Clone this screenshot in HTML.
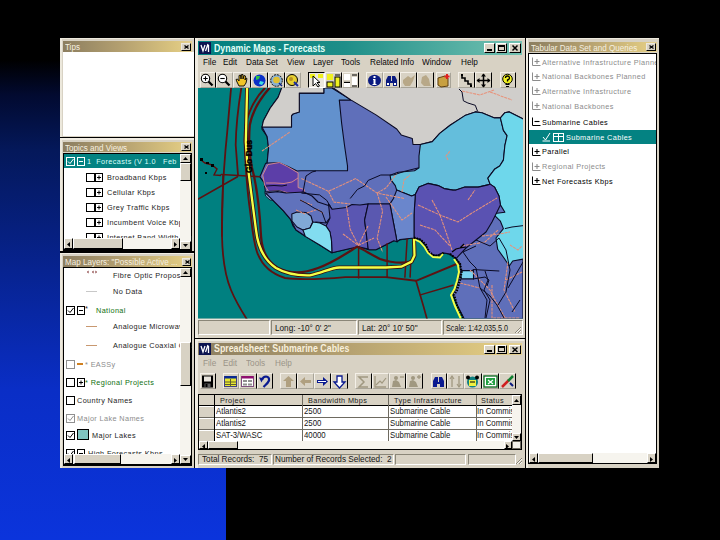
<!DOCTYPE html>
<html><head><meta charset="utf-8"><style>
*{margin:0;padding:0;box-sizing:border-box}
html,body{width:720px;height:540px;overflow:hidden;background:#000}
body{position:relative;font-family:"Liberation Sans",sans-serif;font-size:9px;color:#000}
.a{position:absolute}
svg.a{overflow:visible}
.tt{background:linear-gradient(to right,#8c7e60,#b4a070 45%,#dcc680 88%,#e4d092)}
.ta{background:linear-gradient(to right,#007e7e,#1e8e88 45%,#74c2b2)}
.txt{white-space:nowrap;font-size:9px;line-height:11px;transform-origin:0 0}
.ttx{white-space:nowrap;color:#f6f0e0;font-size:9.6px;line-height:11px;transform:scaleX(.84);transform-origin:0 0}
.tax{white-space:nowrap;font-weight:bold;font-size:10.5px;line-height:14px;transform:scaleX(.84);transform-origin:0 0}
.mn{white-space:nowrap;font-size:9px;line-height:11px;transform:scaleX(.91);transform-origin:0 0;color:#141414}
.btn{background:#d8d2c4;border-top:1px solid #fff;border-left:1px solid #fff;border-right:1px solid #000;border-bottom:1px solid #000}
.tb{background:#d8d2c4;border-top:1px solid #f4f0e8;border-left:1px solid #f4f0e8;border-right:1.5px solid #000;border-bottom:1px solid #8a8678}
.gray{color:#8c8c8c}
.green{color:#0a6a0a}
.ls{white-space:nowrap;font-size:7.3px;letter-spacing:.38px;line-height:9px;color:#1c1c1c}
.ls.green{color:#107010}.ls.gray{color:#8c8c8c}
</style></head><body>
<div class="a" style="left:0;top:0;width:226px;height:540px;background:linear-gradient(to bottom,#000 0px,#000 60px,#020a30 95px,#04185a 150px,#0a2ec6 390px,#0b34dc 540px)"></div>
<div class="a" style="left:60px;top:38px;width:599px;height:430px;background:#d8d2c4"></div>
<div class="a" style="left:60px;top:38px;width:599px;height:1px;background:#ece8dc"></div>
<div class="a" style="left:60px;top:38px;width:2px;height:430px;background:#ece8dc"></div>
<div class="a tt" style="left:63px;top:41px;width:129px;height:11px"></div>
<div class="a ttx" style="left:65px;top:41px;">Tips</div>
<div class="a" style="left:181px;top:43px;width:10px;height:8px;background:#d8d2c4;border-top:1px solid #ece8e0;border-left:1px solid #ece8e0;border-right:1px solid #000;border-bottom:1px solid #000"></div>
<svg class="a" style="left:183.5px;top:45px" width="5" height="4" viewBox="0 0 5 4"><path d="M0.5,0.5 L4.5,3.5 M4.5,0.5 L0.5,3.5" stroke="#000" stroke-width="1.3"/></svg>
<div class="a" style="left:62.5px;top:52px;width:131px;height:83.5px;background:#fff"></div>
<div class="a tt" style="left:63px;top:142px;width:129px;height:10px"></div>
<div class="a ttx" style="left:65px;top:141.5px;">Topics and Views</div>
<div class="a" style="left:181px;top:143px;width:10px;height:8px;background:#d8d2c4;border-top:1px solid #ece8e0;border-left:1px solid #ece8e0;border-right:1px solid #000;border-bottom:1px solid #000"></div>
<svg class="a" style="left:183.5px;top:145px" width="5" height="4" viewBox="0 0 5 4"><path d="M0.5,0.5 L4.5,3.5 M4.5,0.5 L0.5,3.5" stroke="#000" stroke-width="1.3"/></svg>
<div class="a" style="left:63px;top:153px;width:129px;height:98px;background:#000"></div>
<div class="a" style="left:64px;top:154px;width:116px;height:84px;background:#fff"></div>
<div class="a" style="left:64px;top:154px;width:116px;height:14px;background:#048282"></div>
<div class="a" style="left:66px;top:157px;width:9px;height:9px;border:1px solid #fff;background:transparent"></div>
<svg class="a" style="left:67px;top:158px" width="7" height="7" viewBox="0 0 7 7"><path d="M1,3.5 L3,5.5 L6.5,1" stroke="#fff" stroke-width="1" fill="none"/></svg>
<div class="a" style="left:77px;top:157px;width:8px;height:9px;border:1px solid #fff;background:transparent"></div>
<svg class="a" style="left:77px;top:157px" width="8" height="9" viewBox="0 0 8 9"><path d="M2,4.5 L6,4.5" stroke="#fff" stroke-width="1"/></svg>
<div class="a ls" style="left:87px;top:157px;color:#d8fff8">1 &nbsp;Forecasts (V 1.0 &nbsp; Feb</div>
<div class="a" style="left:86px;top:173px;width:9px;height:9px;border:1px solid #000;background:#fff"></div>
<div class="a" style="left:95px;top:173px;width:8px;height:9px;border:1px solid #000;background:#fff"></div>
<svg class="a" style="left:95px;top:173px" width="8" height="9" viewBox="0 0 8 9"><path d="M2,4.5 L6,4.5" stroke="#000" stroke-width="1"/><path d="M4,2.5 L4,6.5" stroke="#000" stroke-width="1"/></svg>
<div class="a ls" style="left:107px;top:172.5px;">Broadband Kbps</div>
<div class="a" style="left:86px;top:188px;width:9px;height:9px;border:1px solid #000;background:#fff"></div>
<div class="a" style="left:95px;top:188px;width:8px;height:9px;border:1px solid #000;background:#fff"></div>
<svg class="a" style="left:95px;top:188px" width="8" height="9" viewBox="0 0 8 9"><path d="M2,4.5 L6,4.5" stroke="#000" stroke-width="1"/><path d="M4,2.5 L4,6.5" stroke="#000" stroke-width="1"/></svg>
<div class="a ls" style="left:107px;top:187.5px;">Cellular Kbps</div>
<div class="a" style="left:86px;top:203px;width:9px;height:9px;border:1px solid #000;background:#fff"></div>
<div class="a" style="left:95px;top:203px;width:8px;height:9px;border:1px solid #000;background:#fff"></div>
<svg class="a" style="left:95px;top:203px" width="8" height="9" viewBox="0 0 8 9"><path d="M2,4.5 L6,4.5" stroke="#000" stroke-width="1"/><path d="M4,2.5 L4,6.5" stroke="#000" stroke-width="1"/></svg>
<div class="a ls" style="left:107px;top:202.5px;">Grey Traffic Kbps</div>
<div class="a" style="left:86px;top:218px;width:9px;height:9px;border:1px solid #000;background:#fff"></div>
<div class="a" style="left:95px;top:218px;width:8px;height:9px;border:1px solid #000;background:#fff"></div>
<svg class="a" style="left:95px;top:218px" width="8" height="9" viewBox="0 0 8 9"><path d="M2,4.5 L6,4.5" stroke="#000" stroke-width="1"/><path d="M4,2.5 L4,6.5" stroke="#000" stroke-width="1"/></svg>
<div class="a ls" style="left:107px;top:217.5px;">Incumbent Voice Kbps</div>
<div class="a" style="left:86px;top:233px;width:9px;height:9px;border:1px solid #000;background:#fff"></div>
<div class="a" style="left:95px;top:233px;width:8px;height:9px;border:1px solid #000;background:#fff"></div>
<svg class="a" style="left:95px;top:233px" width="8" height="9" viewBox="0 0 8 9"><path d="M2,4.5 L6,4.5" stroke="#000" stroke-width="1"/><path d="M4,2.5 L4,6.5" stroke="#000" stroke-width="1"/></svg>
<div class="a ls" style="left:107px;top:232.5px;">Internet Band Width Kbps</div>
<div class="a" style="left:180px;top:154px;width:11px;height:96px;background:#f6f4ee"></div>
<div class="a" style="left:180px;top:154px;width:11px;height:9px;background:#d8d2c4;border-top:1px solid #fff;border-left:1px solid #fff;border-right:1px solid #000;border-bottom:1px solid #000"></div>
<svg class="a" style="left:182px;top:156px" width="7" height="5" viewBox="0 0 7 5"><path d="M3.5,1 L6,4 L1,4 Z" fill="#000"/></svg>
<div class="a" style="left:180px;top:163px;width:11px;height:18px;background:#d8d2c4;border-top:1px solid #fff;border-left:1px solid #fff;border-right:1px solid #000;border-bottom:1px solid #000"></div>
<div class="a" style="left:180px;top:241px;width:11px;height:9px;background:#d8d2c4;border-top:1px solid #fff;border-left:1px solid #fff;border-right:1px solid #000;border-bottom:1px solid #000"></div>
<svg class="a" style="left:182px;top:243px" width="7" height="5" viewBox="0 0 7 5"><path d="M1,1 L6,1 L3.5,4 Z" fill="#000"/></svg>
<div class="a" style="left:64px;top:238px;width:116px;height:11px;background:#f6f4ee"></div>
<div class="a" style="left:64px;top:238px;width:9px;height:11px;background:#d8d2c4;border-top:1px solid #fff;border-left:1px solid #fff;border-right:1px solid #000;border-bottom:1px solid #000"></div>
<svg class="a" style="left:66px;top:241px" width="5" height="7" viewBox="0 0 5 7"><path d="M1,3.5 L4,1 L4,6 Z" fill="#000"/></svg>
<div class="a" style="left:73px;top:238px;width:50px;height:11px;background:#d8d2c4;border-top:1px solid #fff;border-left:1px solid #fff;border-right:1px solid #000;border-bottom:1px solid #000"></div>
<div class="a" style="left:171px;top:238px;width:9px;height:11px;background:#d8d2c4;border-top:1px solid #fff;border-left:1px solid #fff;border-right:1px solid #000;border-bottom:1px solid #000"></div>
<svg class="a" style="left:173px;top:241px" width="5" height="7" viewBox="0 0 5 7"><path d="M4,3.5 L1,1 L1,6 Z" fill="#000"/></svg>
<div class="a" style="left:192px;top:153px;width:2px;height:98px;background:#d8d2c4"></div>
<div class="a" style="left:64px;top:249px;width:127px;height:1.5px;background:#000"></div>
<div class="a tt" style="left:63px;top:256px;width:129px;height:11px"></div>
<div class="a ttx" style="left:65px;top:256px;">Map Layers: "Possible Active ...</div>
<div class="a" style="left:182px;top:258px;width:9px;height:8px;background:#d8d2c4;border-top:1px solid #ece8e0;border-left:1px solid #ece8e0;border-right:1px solid #000;border-bottom:1px solid #000"></div>
<svg class="a" style="left:184.5px;top:260px" width="5" height="4" viewBox="0 0 5 4"><path d="M0.5,0.5 L4.5,3.5 M4.5,0.5 L0.5,3.5" stroke="#000" stroke-width="1.3"/></svg>
<div class="a" style="left:63px;top:267px;width:129px;height:199px;background:#000"></div>
<div class="a" style="left:64px;top:268px;width:116px;height:186px;background:#fff"></div>
<div class="a ls" style="left:113px;top:270.5px;">Fibre Optic Proposed</div>
<svg class="a" style="left:86px;top:270px" width="12" height="4" viewBox="0 0 12 4"><path d="M1,2 L2.5,0.5 L2.5,3.5 Z M6,2 L7.5,0.5 L7.5,3.5 Z M11,2 L9.5,0.5 L9.5,3.5 Z" fill="#701818"/></svg>
<div class="a ls" style="left:113px;top:286.5px;">No Data</div>
<div class="a" style="left:86px;top:290.5px;width:11px;height:1.5px;background:#c8c8c8"></div>
<div class="a" style="left:66px;top:306px;width:9px;height:9px;border:1px solid #000;background:#fff"></div>
<svg class="a" style="left:67px;top:307px" width="7" height="7" viewBox="0 0 7 7"><path d="M1,3.5 L3,5.5 L6.5,1" stroke="#000" stroke-width="1" fill="none"/></svg>
<div class="a" style="left:77px;top:306px;width:8px;height:9px;border:1px solid #000;background:#fff"></div>
<svg class="a" style="left:77px;top:306px" width="8" height="9" viewBox="0 0 8 9"><path d="M2,4.5 L6,4.5" stroke="#000" stroke-width="1"/></svg>
<div class="a ls" style="left:85px;top:304px;">*</div>
<div class="a ls green" style="left:96px;top:305.5px;">National</div>
<div class="a ls" style="left:113px;top:321.5px;">Analogue Microwave</div>
<div class="a" style="left:86px;top:325.5px;width:11px;height:1.5px;background:#c89870"></div>
<div class="a ls" style="left:113px;top:340.5px;">Analogue Coaxial Cable</div>
<div class="a" style="left:86px;top:344.5px;width:11px;height:1.5px;background:#c89870"></div>
<div class="a" style="left:66px;top:360px;width:9px;height:9px;border:1px solid #909090;background:#fff"></div>
<div class="a" style="left:77px;top:363px;width:6px;height:2px;background:#d08020"></div>
<div class="a ls gray" style="left:85px;top:359.5px;">* EASSy</div>
<div class="a" style="left:66px;top:378px;width:9px;height:9px;border:1px solid #000;background:#fff"></div>
<div class="a" style="left:77px;top:378px;width:8px;height:9px;border:1px solid #000;background:#fff"></div>
<svg class="a" style="left:77px;top:378px" width="8" height="9" viewBox="0 0 8 9"><path d="M2,4.5 L6,4.5" stroke="#000" stroke-width="1"/><path d="M4,2.5 L4,6.5" stroke="#000" stroke-width="1"/></svg>
<div class="a ls green" style="left:85px;top:377.5px;">* Regional Projects</div>
<div class="a" style="left:66px;top:396px;width:9px;height:9px;border:1px solid #000;background:#fff"></div>
<div class="a ls" style="left:77px;top:395.5px;">Country Names</div>
<div class="a" style="left:66px;top:414px;width:9px;height:9px;border:1px solid #909090;background:#fff"></div>
<svg class="a" style="left:67px;top:415px" width="7" height="7" viewBox="0 0 7 7"><path d="M1,3.5 L3,5.5 L6.5,1" stroke="#909090" stroke-width="1" fill="none"/></svg>
<div class="a ls gray" style="left:77px;top:413.5px;">Major Lake Names</div>
<div class="a" style="left:66px;top:431px;width:9px;height:9px;border:1px solid #000;background:#fff"></div>
<svg class="a" style="left:67px;top:432px" width="7" height="7" viewBox="0 0 7 7"><path d="M1,3.5 L3,5.5 L6.5,1" stroke="#000" stroke-width="1" fill="none"/></svg>
<div class="a" style="left:77px;top:429px;width:12px;height:11px;background:#80c4c0;border:1px solid #000"></div>
<div class="a ls" style="left:92px;top:431px;">Major Lakes</div>
<div class="a" style="left:66px;top:449px;width:9px;height:9px;border:1px solid #000;background:#fff"></div>
<svg class="a" style="left:67px;top:450px" width="7" height="7" viewBox="0 0 7 7"><path d="M1,3.5 L3,5.5 L6.5,1" stroke="#000" stroke-width="1" fill="none"/></svg>
<div class="a" style="left:77px;top:449px;width:8px;height:9px;border:1px solid #000;background:#fff"></div>
<svg class="a" style="left:77px;top:449px" width="8" height="9" viewBox="0 0 8 9"><path d="M2,4.5 L6,4.5" stroke="#000" stroke-width="1"/></svg>
<div class="a ls" style="left:88px;top:448.5px;">High Forecasts Kbps</div>
<div class="a" style="left:180px;top:268px;width:11px;height:196px;background:#f6f4ee"></div>
<div class="a" style="left:180px;top:268px;width:11px;height:9px;background:#d8d2c4;border-top:1px solid #fff;border-left:1px solid #fff;border-right:1px solid #000;border-bottom:1px solid #000"></div>
<svg class="a" style="left:182px;top:270px" width="7" height="5" viewBox="0 0 7 5"><path d="M3.5,1 L6,4 L1,4 Z" fill="#000"/></svg>
<div class="a" style="left:180px;top:342px;width:11px;height:44px;background:#d8d2c4;border-top:1px solid #fff;border-left:1px solid #fff;border-right:1px solid #000;border-bottom:1px solid #000"></div>
<div class="a" style="left:180px;top:455px;width:11px;height:9px;background:#d8d2c4;border-top:1px solid #fff;border-left:1px solid #fff;border-right:1px solid #000;border-bottom:1px solid #000"></div>
<svg class="a" style="left:182px;top:457px" width="7" height="5" viewBox="0 0 7 5"><path d="M1,1 L6,1 L3.5,4 Z" fill="#000"/></svg>
<div class="a" style="left:64px;top:454px;width:116px;height:10px;background:#f6f4ee"></div>
<div class="a" style="left:64px;top:454px;width:9px;height:10px;background:#d8d2c4;border-top:1px solid #fff;border-left:1px solid #fff;border-right:1px solid #000;border-bottom:1px solid #000"></div>
<svg class="a" style="left:66px;top:457px" width="5" height="7" viewBox="0 0 5 7"><path d="M1,3.5 L4,1 L4,6 Z" fill="#000"/></svg>
<div class="a" style="left:74px;top:454px;width:47px;height:10px;background:#d8d2c4;border-top:1px solid #fff;border-left:1px solid #fff;border-right:1px solid #000;border-bottom:1px solid #000"></div>
<div class="a" style="left:171px;top:454px;width:9px;height:10px;background:#d8d2c4;border-top:1px solid #fff;border-left:1px solid #fff;border-right:1px solid #000;border-bottom:1px solid #000"></div>
<svg class="a" style="left:173px;top:457px" width="5" height="7" viewBox="0 0 5 7"><path d="M4,3.5 L1,1 L1,6 Z" fill="#000"/></svg>
<div class="a" style="left:192px;top:267px;width:2px;height:199px;background:#d8d2c4"></div>
<div class="a" style="left:64px;top:464px;width:127px;height:1.5px;background:#000"></div>
<div class="a ta" style="left:198px;top:41px;width:324px;height:14px"></div>
<div class="a" style="left:199px;top:42px;width:12px;height:12px;background:#0c1450"></div>
<svg class="a" style="left:199px;top:42px" width="12" height="12" viewBox="0 0 12 12"><path d="M2,3 L4,9 L6,3 M6.5,9 L9,2 M9.5,3 L9.5,10" stroke="#fff" stroke-width="1.3" fill="none"/></svg>
<div class="a tax" style="left:214px;top:41px;color:#e0fff8">Dynamic Maps - Forecasts</div>
<div class="a" style="left:484px;top:43px;width:11px;height:10px;background:#d8d2c4;border-top:1px solid #fff;border-left:1px solid #fff;border-right:1px solid #000;border-bottom:1px solid #000"></div>
<div class="a" style="left:487px;top:49px;width:5px;height:2px;background:#000"></div>
<div class="a" style="left:496px;top:43px;width:11px;height:10px;background:#d8d2c4;border-top:1px solid #fff;border-left:1px solid #fff;border-right:1px solid #000;border-bottom:1px solid #000"></div>
<div class="a" style="left:498px;top:44.5px;width:7px;height:6.5px;border:1px solid #000;border-top-width:2px"></div>
<div class="a" style="left:509px;top:43px;width:12px;height:10px;background:#d8d2c4;border-top:1px solid #fff;border-left:1px solid #fff;border-right:1px solid #000;border-bottom:1px solid #000"></div>
<svg class="a" style="left:512px;top:45px" width="6" height="6" viewBox="0 0 6 6"><path d="M0.5,0.5 L5.5,5.5 M5.5,0.5 L0.5,5.5" stroke="#000" stroke-width="1.5"/></svg>
<div class="a mn" style="left:203px;top:57px;font-size:9px;color:#080808">File</div>
<div class="a mn" style="left:223px;top:57px;font-size:9px;color:#080808">Edit</div>
<div class="a mn" style="left:246px;top:57px;font-size:9px;color:#080808">Data Set</div>
<div class="a mn" style="left:287px;top:57px;font-size:9px;color:#080808">View</div>
<div class="a mn" style="left:313px;top:57px;font-size:9px;color:#080808">Layer</div>
<div class="a mn" style="left:341px;top:57px;font-size:9px;color:#080808">Tools</div>
<div class="a mn" style="left:370px;top:57px;font-size:9px;color:#080808">Related Info</div>
<div class="a mn" style="left:422px;top:57px;font-size:9px;color:#080808">Window</div>
<div class="a mn" style="left:461px;top:57px;font-size:9px;color:#080808">Help</div>
<div class="a" style="left:200px;top:72px;width:16px;height:16px;background:#d8d2c4;border-top:1px solid #f4f0e8;border-left:1px solid #f4f0e8;border-right:1.5px solid #000;border-bottom:1px solid #a8a498"></div>
<svg class="a" style="left:200.0px;top:72.5px" width="15" height="15" viewBox="0 0 15 15"><circle cx="5.5" cy="5.5" r="4.2" fill="#fff" stroke="#000" stroke-width="1.1"/><path d="M3.3,5.5 L7.7,5.5 M5.5,3.3 L5.5,7.7" stroke="#000" stroke-width="1.1"/><path d="M8.5,8.5 L12.5,12.5" stroke="#000" stroke-width="2.3"/></svg>
<div class="a" style="left:216px;top:72px;width:17px;height:16px;background:#d8d2c4;border-top:1px solid #f4f0e8;border-left:1px solid #f4f0e8;border-right:1.5px solid #a8a498;border-bottom:1px solid #a8a498"></div>
<svg class="a" style="left:216.5px;top:72.5px" width="15" height="15" viewBox="0 0 15 15"><circle cx="5.5" cy="5.5" r="4.2" fill="#fff" stroke="#000" stroke-width="1.1"/><path d="M3.3,5.5 L7.7,5.5" stroke="#000" stroke-width="1.1"/><path d="M8.5,8.5 L12.5,12.5" stroke="#000" stroke-width="2.3"/></svg>
<div class="a" style="left:233px;top:72px;width:18px;height:16px;background:#d8d2c4;border-top:1px solid #f4f0e8;border-left:1px solid #f4f0e8;border-right:1.5px solid #000;border-bottom:1px solid #a8a498"></div>
<svg class="a" style="left:234.0px;top:72.5px" width="15" height="15" viewBox="0 0 15 15"><path d="M3,9 L2,6.5 L3.5,6 L5,8 L5,2.5 L6.5,2 L7,6 L7.5,1.5 L9,1.5 L9,6 L10,2.5 L11.5,3 L11,7 L12,5 L13,5.5 L12,10 L10,13 L5,13 Z" fill="#f2c428" stroke="#000" stroke-width="0.9" stroke-linejoin="round"/></svg>
<div class="a" style="left:251px;top:72px;width:17px;height:16px;background:#d8d2c4;border-top:1px solid #f4f0e8;border-left:1px solid #f4f0e8;border-right:1.5px solid #000;border-bottom:1px solid #a8a498"></div>
<svg class="a" style="left:251.5px;top:72.5px" width="15" height="15" viewBox="0 0 15 15"><circle cx="7.5" cy="7.5" r="6" fill="#0a30c8"/><path d="M4,3 L8,3 L7,6 L4,7 Z" fill="#30c040"/><path d="M8,8 L12,9 L10,12 L7,11 Z" fill="#40e0e0"/></svg>
<div class="a" style="left:268px;top:72px;width:17px;height:16px;background:#d8d2c4;border-top:1px solid #f4f0e8;border-left:1px solid #f4f0e8;border-right:1.5px solid #000;border-bottom:1px solid #a8a498"></div>
<svg class="a" style="left:268.5px;top:72.5px" width="15" height="15" viewBox="0 0 15 15"><circle cx="7.5" cy="7.5" r="5.8" fill="#8ab0d0" stroke="#000" stroke-width="1" stroke-dasharray="2,1"/><circle cx="7.5" cy="7" r="3.3" fill="#e0c030"/><path d="M10,10 L13,13" stroke="#0a2080" stroke-width="1.5"/></svg>
<div class="a" style="left:285px;top:72px;width:16px;height:16px;background:#d8d2c4;border-top:1px solid #f4f0e8;border-left:1px solid #f4f0e8;border-right:1.5px solid #a8a498;border-bottom:1px solid #a8a498"></div>
<svg class="a" style="left:285.0px;top:72.5px" width="15" height="15" viewBox="0 0 15 15"><circle cx="7" cy="7" r="5.5" fill="#e8d030" stroke="#000" stroke-width="1"/><circle cx="6" cy="6" r="2" fill="#b89020"/><path d="M9,9 L13,13" stroke="#1a2aa0" stroke-width="2"/></svg>
<div class="a" style="left:308px;top:72px;width:17px;height:16px;background:#ebe7de;border-top:1.5px solid #000;border-left:1.5px solid #000;border-right:1px solid #fff;border-bottom:1px solid #fff"></div>
<svg class="a" style="left:308.5px;top:72.5px" width="15" height="15" viewBox="0 0 15 15"><rect x="1" y="1" width="5" height="4" fill="#f0f020"/><rect x="9" y="1" width="5" height="4" fill="#f0f020"/><path d="M4,3 L4,13 L6.5,10.5 L9,14 L10.5,13 L8,9.5 L11,9.5 Z" fill="#fff" stroke="#000" stroke-width="1"/></svg>
<div class="a" style="left:325px;top:72px;width:17px;height:16px;background:#d8d2c4;border-top:1px solid #f4f0e8;border-left:1px solid #f4f0e8;border-right:1.5px solid #000;border-bottom:1px solid #a8a498"></div>
<svg class="a" style="left:325.5px;top:72.5px" width="15" height="15" viewBox="0 0 15 15"><rect x="1" y="1" width="6" height="6" fill="#f0f020"/><rect x="1" y="9" width="6" height="5" fill="#f0f020" stroke="#000" stroke-width="1"/><rect x="9" y="4" width="5" height="10" fill="#f0f020" stroke="#000" stroke-width="1"/><path d="M9,2 L14,2" stroke="#000"/></svg>
<div class="a" style="left:342px;top:72px;width:17px;height:16px;background:#d8d2c4;border-top:1px solid #f4f0e8;border-left:1px solid #f4f0e8;border-right:1.5px solid #000;border-bottom:1px solid #a8a498"></div>
<svg class="a" style="left:342.5px;top:72.5px" width="15" height="15" viewBox="0 0 15 15"><rect x="1" y="1" width="6" height="6" fill="#fff"/><path d="M1,9.5 L7,9.5" stroke="#000" stroke-width="1.3"/><rect x="1" y="10" width="6" height="4" fill="#fff"/><rect x="9" y="4" width="5" height="8" fill="#fff"/><path d="M9,2 L14,2 M9,13 L14,13" stroke="#000" stroke-width="1.2"/></svg>
<div class="a" style="left:366px;top:72px;width:17px;height:16px;background:#d8d2c4;border-top:1px solid #f4f0e8;border-left:1px solid #f4f0e8;border-right:1.5px solid #a8a498;border-bottom:1px solid #a8a498"></div>
<svg class="a" style="left:366.5px;top:72.5px" width="15" height="15" viewBox="0 0 15 15"><ellipse cx="7.5" cy="7.5" rx="6.5" ry="5.8" fill="#0a1a80"/><rect x="6.5" y="3" width="2" height="2" fill="#fff"/><path d="M6,6 L8.5,6 L8.5,11 L9.5,11 L9.5,12 L5.5,12 L5.5,11 L6.5,11 L6.5,7 L6,7Z" fill="#fff"/></svg>
<div class="a" style="left:383px;top:72px;width:17px;height:16px;background:#d8d2c4;border-top:1px solid #f4f0e8;border-left:1px solid #f4f0e8;border-right:1.5px solid #000;border-bottom:1px solid #a8a498"></div>
<svg class="a" style="left:383.5px;top:72.5px" width="15" height="15" viewBox="0 0 15 15"><path d="M2,13 L2,7 L4,3 L7,3 L7,8 L8,8 L8,3 L11,3 L13,7 L13,13 L9,13 L9,10 L6,10 L6,13 Z" fill="#0a1a80"/><rect x="3" y="10" width="2" height="2" fill="#fff"/><rect x="10" y="10" width="2" height="2" fill="#fff"/></svg>
<div class="a" style="left:400px;top:72px;width:17px;height:16px;background:#d8d2c4;border-top:1px solid #f4f0e8;border-left:1px solid #f4f0e8;border-right:1.5px solid #000;border-bottom:1px solid #a8a498"></div>
<svg class="a" style="left:400.5px;top:72.5px" width="15" height="15" viewBox="0 0 15 15"><path d="M2,7 L7,3 L10,5 L14,2 L12,8 L9,13 L4,13 L2,10 Z" fill="#b8a888"/></svg>
<div class="a" style="left:417px;top:72px;width:17px;height:16px;background:#d8d2c4;border-top:1px solid #f4f0e8;border-left:1px solid #f4f0e8;border-right:1.5px solid #000;border-bottom:1px solid #a8a498"></div>
<svg class="a" style="left:417.5px;top:72.5px" width="15" height="15" viewBox="0 0 15 15"><path d="M4,4 L8,2 L11,6 L12,11 L13,13 L6,13 L3,10 Z" fill="#b8a888"/></svg>
<div class="a" style="left:436px;top:72px;width:15px;height:16px;background:#d8d2c4;border-top:1px solid #f4f0e8;border-left:1px solid #f4f0e8;border-right:1.5px solid #a8a498;border-bottom:1px solid #a8a498"></div>
<svg class="a" style="left:435.5px;top:72.5px" width="15" height="15" viewBox="0 0 15 15"><path d="M2,5 L9,3 L12,5 L12,13 L5,14 L2,12 Z" fill="#c8a040" stroke="#604010" stroke-width="1"/><path d="M11,1 L11,6 M8.5,3.5 L13.5,3.5" stroke="#e02020" stroke-width="2"/></svg>
<div class="a" style="left:458px;top:72px;width:17px;height:16px;background:#d8d2c4;border-top:1px solid #f4f0e8;border-left:1px solid #f4f0e8;border-right:1.5px solid #000;border-bottom:1px solid #a8a498"></div>
<svg class="a" style="left:458.5px;top:72.5px" width="15" height="15" viewBox="0 0 15 15"><path d="M3,2 L3,5 L6,5 L6,8 L9,8 L9,11 L12,11 L12,13" stroke="#000" stroke-width="1.6" fill="none"/><rect x="2" y="1" width="2" height="2"/><rect x="11" y="12" width="2" height="2"/></svg>
<div class="a" style="left:475px;top:72px;width:17px;height:16px;background:#d8d2c4;border-top:1px solid #f4f0e8;border-left:1px solid #f4f0e8;border-right:1.5px solid #000;border-bottom:1px solid #a8a498"></div>
<svg class="a" style="left:475.5px;top:72.5px" width="15" height="15" viewBox="0 0 15 15"><path d="M7.5,1 L7.5,14 M1,7.5 L14,7.5" stroke="#000" stroke-width="1.5"/><path d="M7.5,0.5 L5,3.5 L10,3.5Z M7.5,14.5 L5,11.5 L10,11.5Z M0.5,7.5 L3.5,5 L3.5,10Z M14.5,7.5 L11.5,5 L11.5,10Z" fill="#000"/></svg>
<div class="a" style="left:500px;top:72px;width:16px;height:16px;background:#d8d2c4;border-top:1px solid #f4f0e8;border-left:1px solid #f4f0e8;border-right:1.5px solid #000;border-bottom:1px solid #a8a498"></div>
<svg class="a" style="left:500.0px;top:72.5px" width="15" height="15" viewBox="0 0 15 15"><circle cx="7.5" cy="6" r="4.8" fill="#f0f020" stroke="#000" stroke-width="1"/><path d="M5.5,5 Q5.5,3 7.5,3 Q9.5,3 9.5,5 Q9.5,6.5 7.5,7 L7.5,8.5" stroke="#000" stroke-width="1.3" fill="none"/><path d="M5.5,11.5 L9.5,11.5 M6,13.5 L9,13.5" stroke="#000" stroke-width="1.2"/></svg>
<svg class="a" style="left:198px;top:88px" width="325" height="231" viewBox="198 88 325 231">
<defs><clipPath id="mc"><rect x="198" y="88" width="325" height="230.5"/></clipPath></defs>
<g clip-path="url(#mc)">
<rect x="198" y="88" width="325" height="231" fill="#008080"/>
<g stroke="#0a0a24" stroke-width="1.1" stroke-linejoin="round">
<!-- land base (Mali / Cameroon blue) -->
<path fill="#5f6fba" d="M282,88 L278.2,97.1 L270.1,108.2 L263.4,120.8 L261.9,129 L267.1,136.4 L268.6,148.2 L267.1,163 L265.6,163.4 L261.2,173.8 L259.7,176.7 L264.1,182.7 L265.6,193 L273,200.4 L283.4,210.8 L290.8,219.7 L293,226 L296,230 L305.3,236.4 L320.1,245.3 L331.9,252.7 L351.2,248.2 L358.6,246.7 L369,249.7 L376,249.7 L384.9,245.3 L393.8,240.8 L413,237.9 L420.4,239.3 L426.4,246.7 L429.3,254.1 L436.7,255.6 L442.7,252.7 L450.1,254.1 L456,258.6 L460.4,264.5 L459,277.9 L456,288.2 L452.7,294.3 L457.7,306 L464.3,319 L523,319 L523,88 Z"/>
<!-- Mauritania -->
<path fill="#6291cd" d="M262,127 L291.5,127 L291.5,115.6 L293,114 L299.3,112 L299.3,93.1 L323.8,93.1 L323.8,88 L331.9,88 L351.2,100.1 L339.3,100.1 L341.6,123 L344.5,145.3 L347.5,166 L347.5,170.8 L300.8,170.8 L297,171 L288,166.4 L279,162.7 L267.1,163 L268.6,148.2 L267.1,136.4 Z"/>
<!-- gray north -->
<path fill="#d0cecb" d="M282,87 L278.2,97.1 L270.1,108.2 L263.4,120.8 L262,127 L291.5,127 L291.5,115.6 L293,114 L299.3,112 L299.3,93.1 L323.8,93.1 L323.8,87 L331.9,87 L351.2,100.1 L376,114.9 L396.7,129 L401.2,134.9 L412.3,138.6 L413,144.5 L420.4,144.5 L432.3,141.6 L439.7,133.4 L450.1,125.3 L464.9,115.6 L475.3,111.9 L481.9,112.7 L494.5,117.9 L500.4,117.9 L504.9,112.7 L509.3,111.9 L524,119.3 L524,87 Z"/>
<!-- Niger -->
<path fill="#64bedc" d="M420.4,144.5 L432.3,141.6 L439.7,133.4 L450.1,125.3 L464.9,115.6 L475.3,111.9 L481.9,112.7 L494.5,117.9 L500.4,117.9 L503.4,130.4 L507.1,135.6 L504.9,145.3 L503.4,160.1 L499.7,166 L494.5,169.3 L487.9,178.2 L490.1,184.1 L487.9,184.9 L478.2,187.1 L464.9,187.1 L456,190.1 L453,190.1 L444.1,188.6 L438.2,185.6 L427.9,183.4 L419,187.1 L415.3,194.5 L411.6,196 L404.1,193 L396.7,190.1 L395.3,185.6 L390.8,179.7 L390.1,175.3 L398.2,172.3 L414.5,170.8 L419,167.9 L419,156 Z"/>
<!-- Chad -->
<path fill="#6ed7eb" d="M500.4,117.9 L504.9,112.7 L509.3,111.9 L524,119.3 L524,259 L512.7,261 L509.3,266 L504,258 L497.7,249.3 L496,238 L503.4,228.6 L500.4,221.2 L493,213.8 L504.9,212.3 L500.4,204.9 L499,196 L494.5,187.1 L490.1,184.1 L487.9,178.2 L494.5,169.3 L499.7,166 L503.4,160.1 L504.9,145.3 L507.1,135.6 L503.4,130.4 Z"/>
<!-- Nigeria -->
<path fill="#5a52b2" d="M415.3,194.5 L419,187.1 L427.9,183.4 L438.2,185.6 L444.1,188.6 L453,190.1 L456,190.1 L464.9,187.1 L478.2,187.1 L487.9,184.9 L490.1,184.1 L494.5,187.1 L499,196 L500.4,204.9 L497,212 L492,222 L486,232 L476,240 L466,248 L456,258.6 L450.1,254.1 L442.7,252.7 L436.7,255.6 L429.3,254.1 L426.4,246.7 L420.4,239.3 L414,238 L414,215 Z"/>
<!-- Togo/Benin -->
<path fill="#6a86cc" d="M389.9,203.9 L393.5,198.5 L396.7,190.1 L404.1,193 L411.6,196 L415.3,194.5 L414,215 L414,238 L400,239.5 L397.1,241.8 Z"/>
<!-- Senegal -->
<path fill="#5c3ea8" stroke="#e08a8a" stroke-width="0.9" d="M262.7,175 L267.9,164.6 L279.3,162.5 L287.7,166.7 L298.1,172.9 L298.1,187.5 L304.3,189.6 L304.3,194.8 L291.8,193.75 L279.3,190.6 L268.9,191.7 L264.75,185.4 Z"/>
<path fill="none" stroke="#e08a8a" stroke-width="0.9" d="M266,183 L275,183 L284,183.5 L292,182 L298,178"/>
<path fill="none" stroke="#0a0a24" stroke-width="1" d="M266,186 L274,185.5 L282,186 L287,185"/>
<!-- Guinea-Bissau light -->
<path fill="#86a4d4" stroke="#0a0a24" stroke-width="0.8" d="M264.75,191.7 L279.3,190.6 L286,193 L284,198 L278,201 L270,200 L265.6,196 Z"/>
<!-- Guinea / G-Bissau -->
<path fill="#6072bc" d="M265.6,193 L277.5,191.6 L286,193 L303.8,192 L312,196 L318,202 L330,206 L332,215 L326,223 L316,222 L310,228 L305,236 L296,230 L290.8,219.7 L283.4,210.8 L273,200.4 Z"/>
<!-- Cote d'Ivoire -->
<path fill="#5a56b2" d="M328.5,204 L332.1,209.3 L346.5,207.5 L352,204.5 L360,205 L368.2,203.9 L364.6,220.2 L368.2,249 L358.6,246.7 L351.2,248.2 L331.9,252.7 L331.5,241 L330,232 L326,226 L330,218 Z"/>
<!-- Ghana -->
<path fill="#5a58b0" d="M368.2,203.9 L389.9,203.9 L397.1,241.8 L393.8,240.8 L384.9,245.3 L376,249.7 L369,249.7 L368.2,249 L364.6,220.2 Z"/>
<!-- Sierra Leone -->
<path fill="#80a8d6" d="M291.8,214 L297,212 L306,212.5 L311,216 L312.7,222 L310,228 L303,230 L297,227 L292,221 Z"/>
<!-- Liberia -->
<path fill="#82dcf0" d="M303,230 L310,228 L313,222 L320,223 L326,226 L330,232 L331.5,241 L331.9,252.7 L320.1,245.3 L305.3,236.4 Z"/>
<rect x="461" y="270.6" width="12.5" height="8.3" fill="#7ad2f0"/>
</g>
<!-- roads pink -->
<g fill="none" stroke="#e8927a" stroke-width="1.05" stroke-dasharray="3,0.8">
<path d="M262,151 L290,132"/>
<path d="M301.4,178.6 L328.5,191.3 L355.6,178.6 L377.2,193.1 L404.3,198.5"/>
<path d="M328.5,191.3 L333.9,202.1 L350.2,203.9"/>
<path d="M377.2,193.1 L386.3,187.7 L397.1,173.2"/>
<path d="M377.2,193.1 L382.6,211.1 L377.2,238.2 L382.6,252"/>
<path d="M346.5,205.7 L350.2,229.2 L358.3,245.4"/>
<path d="M343,234 L358.3,245.4 L368,226 M358.3,245.4 L374,238"/>
<path d="M306.8,212.9 L317.7,209.3 L324,214"/>
<path d="M386,197 L402,220 L412,213"/>
<path d="M300,200 L312,205"/>

<path d="M296,210 L305,214"/>
<path d="M402,192 L404,180 L410,175"/>
<path d="M418,205 L440,215 L458,222 L472,213 L497,198"/>
<path d="M440,215 L447,235 L452,250"/>
<path d="M420,225 L435,230 L450,246"/>
<path d="M432,200 L440,215"/>
<path d="M462,246 L485,242 L498,230"/>
<path d="M470,270 L490,290 L495,300 L505,318"/>
<path d="M460,283 L480,288"/>
<path d="M482,236 L500,234 L510,232"/>
<path d="M492,285 L492,318 L520,318"/>
<path d="M462,91 L480,95 L494,90 M490,92 L512,100"/>
<path d="M508,262 L504,290 L515,312"/>
<path d="M510,245 L518,250 L522,246"/>
<path d="M448,160 L446,156 L450,151"/>
<path d="M506,280 L522,272"/>
<path d="M468,200 L475,190"/>
</g>
<!-- internal borders -->
<g fill="none" stroke="#0a0a24" stroke-width="1">
<path d="M303,192 L306,176 L312,172 L316,171"/>
<path d="M301.4,193.1 L319.5,194.9 L326.7,200.3 L332.1,209.3"/>
<path d="M350.2,198.5 L357.4,189.5 L364.6,185.9 L368.2,180.4 L380.8,175 L393.5,175 L404.3,171.4 L418.7,167.8"/>
<path d="M300,200 L306,203 L314,208 L322,212 L326,223"/>
<path d="M463,252 L470,262 L476,268 L480,288 L490,296 L497,305 L504,318"/>
<path d="M473,279 L485,277 L489,280 L487,286"/>
<path d="M480,288 L487,300 L485,318"/>
<path d="M499,238 L506,250 L510,270 L506,292 L498,305"/>
<path d="M523,262 L515,276 L508,288"/>
<path d="M476,240 L490,246 L499,238"/>
<path d="M463,252 L476,246"/>
<path d="M520,300 L512,312"/>
<path d="M504.9,228.6 L512,227 L523.4,225.6"/>
<path d="M459,89 L462,92 L463.4,100.8 L467.9,103 L475.3,105.3 L477.5,111.2"/>
<path d="M472.7,269.5 L499.3,271 M485,271 L488,280 L484,290 L490,300 L486,318"/>
</g>
<!-- Cape Verde -->
<path fill="none" stroke="#5a1010" stroke-width="1.4" d="M201,160 L205,163 L212,165 L217,169 L214,175 L221,175.5"/>
<path fill="#000" d="M200,158 h3v3h-3z M206,162 h3v2h-3z M211,164 h3v3h-3z M205,172 h2v2h-2z"/>
<!-- brown cables -->
<g fill="none" stroke="#5c1212" stroke-linecap="round" stroke-linejoin="round">
<path stroke-width="1.8" d="M231.1,88 C229.5,105 228,125 225.5,150 C223,180 221.5,210 222,236 C222.5,262 226,278 231,290 C236,302 241,310 246.7,319"/>
<path stroke-width="1.8" d="M241.3,88 C238.5,105 236,125 235.7,145 L238,175.3"/>
<path stroke-width="1.6" d="M221.2,174.5 L259.7,176.7"/>
<path stroke-width="1.6" d="M198.2,199 L237.5,176.7"/>
<path stroke-width="1.6" d="M223,175 L222,236"/>
<path stroke-width="2.3" d="M269.5,88 C259,100 252,113 249.8,125 C248.5,140 249.5,160 254,176 C258,195 260,215 261,236 C262,252 268,262 278,268 C290,274 305,273 318,268 C335,262 348,252 357.1,246.7 C363,249 370,254 380,259 C395,264 405,263 411.6,261.6"/>

<path stroke-width="1.9" d="M264.9,88 C256,97 249,110 245.5,125 C244.5,132 244.5,137 244.5,140 C245.5,165 247,190 250,210 C252,225 253,240 257,252 C262,266 272,274 285,278 C300,280 320,279.3 345.3,277.1 L386,277.1 L416,280.8 L459,263"/>
<path stroke-width="1.5" d="M358.6,246.7 L358.6,277.9"/>
<path stroke-width="1.5" d="M387.1,243.8 L387.1,277.1"/>
<path stroke-width="1.5" d="M407.1,239.3 L404.9,277.1"/>
<path stroke-width="1.5" d="M410.8,261.6 L410.1,277.1"/>
<path stroke-width="1.7" d="M416,280.8 L423.4,306 L427,319"/>
<path stroke-width="1.5" d="M420.4,294.9 L453,285.3"/>
</g>
<!-- yellow cable -->
<path fill="none" stroke="#3a0c0c" stroke-width="4" stroke-linejoin="round" d="M247.1,88 L245.8,142 L247,160 L249.3,178.2 L256,230 C258,248 264,260 276,268 C288,275 300,275.6 310,275.3 C322,273 330,268 339.3,267.5 L386,267.5 L401.2,266.7 L411.6,261.6 L414.5,255.6 L414,238.6"/>
<path fill="none" stroke="#f4ff48" stroke-width="2.3" stroke-linejoin="round" d="M247.1,88 L245.8,142 L247,160 L249.3,178.2 L256,230 C258,248 264,260 276,268 C288,275 300,275.6 310,275.3 C322,273 330,268 339.3,267.5 L386,267.5 L401.2,266.7 L411.6,261.6 L414.5,255.6 L414,238.6"/>
<!-- coast highlights -->
<path fill="none" stroke="#000" stroke-width="2.2" stroke-dasharray="1.5,1.2" d="M414,237.5 L421,240 L426,245 L429,252 L434,255.5 L441,256 L444,252"/>
<path fill="none" stroke="#f4ff48" stroke-width="1.8" d="M415,239.5 L420,242 L424.5,247 L428,253 L433,257 L440,257.5 L443,254"/>
<path fill="none" stroke="#000" stroke-width="2.4" stroke-dasharray="1.5,1.2" d="M450,254 L455,258 L460,264 L461.5,272 L460,280 L457,290 L454,295 L457,306 L463,319"/>
<path fill="none" stroke="#f4ff48" stroke-width="2" d="M454,259 L458,265 L459,272 L457,281 L454.5,289 L451,295 L455,306 L461,319"/>
<path fill="none" stroke="#000" stroke-width="1.2" d="M452,252 L456,249 L460,248 L466,247 M460,248 L464,244"/>
<!-- label on yellow -->
<g transform="translate(251.5,173) rotate(-90)"><text x="0" y="0" font-family="Liberation Sans" font-size="8.5" font-weight="bold" fill="#000" stroke="#000" stroke-width="0.4" textLength="33" lengthAdjust="spacingAndGlyphs">Glo Dus</text></g>
</g>
</svg>

<div class="a" style="left:198px;top:318.5px;width:325px;height:1.5px;background:#e8e4dc"></div>
<div class="a" style="left:198px;top:320px;width:72px;height:15px;border-top:1px solid #8a8678;border-left:1px solid #8a8678;border-right:1px solid #fff;border-bottom:1px solid #fff"></div>
<div class="a" style="left:271px;top:320px;width:86px;height:15px;border-top:1px solid #8a8678;border-left:1px solid #8a8678;border-right:1px solid #fff;border-bottom:1px solid #fff"></div>
<div class="a mn" style="left:275px;top:323px;font-size:9px">Long: -10° 0' 2"</div>
<div class="a" style="left:358px;top:320px;width:84px;height:15px;border-top:1px solid #8a8678;border-left:1px solid #8a8678;border-right:1px solid #fff;border-bottom:1px solid #fff"></div>
<div class="a mn" style="left:362px;top:323px;font-size:9px">Lat: 20° 10' 50"</div>
<div class="a" style="left:443px;top:320px;width:80px;height:15px;border-top:1px solid #8a8678;border-left:1px solid #8a8678;border-right:1px solid #fff;border-bottom:1px solid #fff"></div>
<div class="a mn" style="left:446px;top:323px;font-size:9px;transform:scaleX(.8)">Scale: 1:42,035,5.0</div>
<svg class="a" style="left:514px;top:326px" width="8" height="8" viewBox="0 0 8 8"><path d="M7,1 L1,7 M7,4 L4,7" stroke="#8a8678" stroke-width="1"/><path d="M7,2 L2,7 M7,5 L5,7" stroke="#fff" stroke-width="0.8"/></svg>
<div class="a tt" style="left:198px;top:343px;width:324px;height:12px"></div>
<div class="a" style="left:199px;top:343px;width:12px;height:12px;background:#0c1450"></div>
<svg class="a" style="left:199px;top:343px" width="12" height="12" viewBox="0 0 12 12"><path d="M2,3 L4,9 L6,3 M6.5,9 L9,2 M9.5,3 L9.5,10" stroke="#fff" stroke-width="1.3" fill="none"/></svg>
<div class="a tax" style="left:214px;top:342px;color:#f8f0dc;line-height:13px">Spreadsheet: Submarine Cables</div>
<div class="a" style="left:484px;top:344.5px;width:11px;height:9.5px;background:#d8d2c4;border-top:1px solid #fff;border-left:1px solid #fff;border-right:1px solid #000;border-bottom:1px solid #000"></div>
<div class="a" style="left:487px;top:350.0px;width:5px;height:2px;background:#000"></div>
<div class="a" style="left:496px;top:344.5px;width:11px;height:9.5px;background:#d8d2c4;border-top:1px solid #fff;border-left:1px solid #fff;border-right:1px solid #000;border-bottom:1px solid #000"></div>
<div class="a" style="left:498px;top:346.0px;width:7px;height:6.0px;border:1px solid #000;border-top-width:2px"></div>
<div class="a" style="left:509px;top:344.5px;width:12px;height:9.5px;background:#d8d2c4;border-top:1px solid #fff;border-left:1px solid #fff;border-right:1px solid #000;border-bottom:1px solid #000"></div>
<svg class="a" style="left:512px;top:346.5px" width="6" height="5.5" viewBox="0 0 6 5.5"><path d="M0.5,0.5 L5.5,5.0 M5.5,0.5 L0.5,5.0" stroke="#000" stroke-width="1.5"/></svg>
<div class="a mn" style="left:203px;top:358px;font-size:9px;color:#9a9488">File</div>
<div class="a mn" style="left:223px;top:358px;font-size:9px;color:#9a9488">Edit</div>
<div class="a mn" style="left:246px;top:358px;font-size:9px;color:#9a9488">Tools</div>
<div class="a mn" style="left:275px;top:358px;font-size:9px;color:#9a9488">Help</div>
<div class="a" style="left:200px;top:373px;width:16px;height:16px;background:#d8d2c4;border-top:1px solid #f4f0e8;border-left:1px solid #f4f0e8;border-right:1.5px solid #000;border-bottom:1px solid #a8a498"></div>
<svg class="a" style="left:200.0px;top:373.5px" width="15" height="15" viewBox="0 0 15 15"><rect x="2" y="1.5" width="11" height="12" fill="#000"/><rect x="4" y="2.5" width="7" height="5" fill="#e8e4dc"/><rect x="4.5" y="9.5" width="6" height="4" fill="#606060"/><rect x="5.5" y="10" width="2" height="3" fill="#000"/></svg>
<div class="a" style="left:223px;top:373px;width:16px;height:16px;background:#d8d2c4;border-top:1px solid #f4f0e8;border-left:1px solid #f4f0e8;border-right:1.5px solid #a8a498;border-bottom:1px solid #a8a498"></div>
<svg class="a" style="left:223.0px;top:373.5px" width="15" height="15" viewBox="0 0 15 15"><rect x="1.5" y="2.5" width="12" height="10" fill="#e8e830" stroke="#404080" stroke-width="1"/><rect x="1.5" y="2" width="12" height="2.5" fill="#0a2a90"/><path d="M2,8 L13,8 M2,10.5 L13,10.5 M7.5,5 L7.5,12.5" stroke="#606030" stroke-width="1"/></svg>
<div class="a" style="left:239px;top:373px;width:18px;height:16px;background:#d8d2c4;border-top:1px solid #f4f0e8;border-left:1px solid #f4f0e8;border-right:1.5px solid #000;border-bottom:1px solid #a8a498"></div>
<svg class="a" style="left:240.0px;top:373.5px" width="15" height="15" viewBox="0 0 15 15"><rect x="1.5" y="2.5" width="12" height="10" fill="#fff" stroke="#805080" stroke-width="1"/><rect x="1.5" y="2" width="12" height="2.5" fill="#901070"/><rect x="3" y="6" width="4" height="2" fill="#909090"/><rect x="8" y="6" width="4" height="2" fill="#909090"/><rect x="3" y="9.5" width="4" height="2" fill="#909090"/><rect x="8" y="9.5" width="4" height="2" fill="#909090"/></svg>
<div class="a" style="left:257px;top:373px;width:16px;height:16px;background:#d8d2c4;border-top:1px solid #f4f0e8;border-left:1px solid #f4f0e8;border-right:1.5px solid #000;border-bottom:1px solid #a8a498"></div>
<svg class="a" style="left:257.0px;top:373.5px" width="15" height="15" viewBox="0 0 15 15"><path d="M5,6 Q6,2.5 9,2.5 Q12.5,3 12,6.5 Q11,9 8,11.5 L6.5,13" stroke="#0a1a90" stroke-width="2.2" fill="none"/><path d="M2,3.5 L6.5,4 L4.5,8.5 Z" fill="#0a1a90"/></svg>
<div class="a" style="left:280px;top:373px;width:17px;height:16px;background:#d8d2c4;border-top:1px solid #f4f0e8;border-left:1px solid #f4f0e8;border-right:1.5px solid #000;border-bottom:1px solid #a8a498"></div>
<svg class="a" style="left:280.5px;top:373.5px" width="15" height="15" viewBox="0 0 15 15"><path d="M7.5,2 L13,7 L10,7 L10,13 L5,13 L5,7 L2,7 Z" fill="#b0a080"/></svg>
<div class="a" style="left:297px;top:373px;width:17px;height:16px;background:#d8d2c4;border-top:1px solid #f4f0e8;border-left:1px solid #f4f0e8;border-right:1.5px solid #a8a498;border-bottom:1px solid #a8a498"></div>
<svg class="a" style="left:297.5px;top:373.5px" width="15" height="15" viewBox="0 0 15 15"><path d="M2,7.5 L7,3 L7,6 L13,6 L13,9 L7,9 L7,12 Z" fill="#b0a080"/></svg>
<div class="a" style="left:314px;top:373px;width:17px;height:16px;background:#d8d2c4;border-top:1px solid #f4f0e8;border-left:1px solid #f4f0e8;border-right:1.5px solid #000;border-bottom:1px solid #a8a498"></div>
<svg class="a" style="left:314.5px;top:373.5px" width="15" height="15" viewBox="0 0 15 15"><path d="M13,7.5 L8,3 L8,6 L2,6 L2,9 L8,9 L8,12 Z" fill="#0a1a90"/><path d="M3,7.5 L11,7.5" stroke="#fff" stroke-width="1"/></svg>
<div class="a" style="left:331px;top:373px;width:17px;height:16px;background:#d8d2c4;border-top:1px solid #f4f0e8;border-left:1px solid #f4f0e8;border-right:1.5px solid #000;border-bottom:1px solid #a8a498"></div>
<svg class="a" style="left:331.5px;top:373.5px" width="15" height="15" viewBox="0 0 15 15"><path d="M7.5,14 L2,8 L5,8 L5,2 L10,2 L10,8 L13,8 Z" fill="#fff" stroke="#0a1a90" stroke-width="1.3"/></svg>
<div class="a" style="left:355px;top:373px;width:17px;height:16px;background:#d8d2c4;border-top:1px solid #f4f0e8;border-left:1px solid #f4f0e8;border-right:1.5px solid #000;border-bottom:1px solid #a8a498"></div>
<svg class="a" style="left:355.5px;top:373.5px" width="15" height="15" viewBox="0 0 15 15"><path d="M12,3 L3,3 L8,8 L3,13 L12,13" stroke="#a09880" stroke-width="1.5" fill="none"/></svg>
<div class="a" style="left:372px;top:373px;width:17px;height:16px;background:#d8d2c4;border-top:1px solid #f4f0e8;border-left:1px solid #f4f0e8;border-right:1.5px solid #a8a498;border-bottom:1px solid #a8a498"></div>
<svg class="a" style="left:372.5px;top:373.5px" width="15" height="15" viewBox="0 0 15 15"><path d="M2,2 L2,13 L13,13" stroke="#a09880" stroke-width="1.3" fill="none"/><path d="M3,11 L7,7 L9,9 L13,4" stroke="#a09880" stroke-width="1.2" fill="none"/></svg>
<div class="a" style="left:389px;top:373px;width:17px;height:16px;background:#d8d2c4;border-top:1px solid #f4f0e8;border-left:1px solid #f4f0e8;border-right:1.5px solid #000;border-bottom:1px solid #a8a498"></div>
<svg class="a" style="left:389.5px;top:373.5px" width="15" height="15" viewBox="0 0 15 15"><path d="M2,13 L3,7 L6,6 L9,8 L11,13 Z" fill="#a09880"/><circle cx="6" cy="4" r="2" fill="#a09880"/><path d="M10,3 L14,3" stroke="#a09880" stroke-width="1.3"/></svg>
<div class="a" style="left:406px;top:373px;width:17px;height:16px;background:#d8d2c4;border-top:1px solid #f4f0e8;border-left:1px solid #f4f0e8;border-right:1.5px solid #000;border-bottom:1px solid #a8a498"></div>
<svg class="a" style="left:406.5px;top:373.5px" width="15" height="15" viewBox="0 0 15 15"><path d="M2,13 L3,7 L6,6 L9,8 L11,13 Z" fill="#a09880"/><circle cx="6" cy="4" r="2" fill="#a09880"/><path d="M10,3 L14,3 M12,1 L12,5" stroke="#a09880" stroke-width="1.3"/></svg>
<div class="a" style="left:431px;top:373px;width:16px;height:16px;background:#d8d2c4;border-top:1px solid #f4f0e8;border-left:1px solid #f4f0e8;border-right:1.5px solid #000;border-bottom:1px solid #a8a498"></div>
<svg class="a" style="left:431.0px;top:373.5px" width="15" height="15" viewBox="0 0 15 15"><path d="M2,13 L2,7 L4,3 L7,3 L7,8 L8,8 L8,3 L11,3 L13,7 L13,13 L9,13 L9,10 L6,10 L6,13 Z" fill="#0a1a90"/></svg>
<div class="a" style="left:447px;top:373px;width:17px;height:16px;background:#d8d2c4;border-top:1px solid #f4f0e8;border-left:1px solid #f4f0e8;border-right:1.5px solid #a8a498;border-bottom:1px solid #a8a498"></div>
<svg class="a" style="left:447.5px;top:373.5px" width="15" height="15" viewBox="0 0 15 15"><path d="M4,2 L4,13 M11,2 L11,13" stroke="#a09880" stroke-width="1.3"/><path d="M2,5 L4,2 L6,5 M9,10 L11,13 L13,10" stroke="#a09880" stroke-width="1.2" fill="none"/></svg>
<div class="a" style="left:464px;top:373px;width:18px;height:16px;background:#d8d2c4;border-top:1px solid #f4f0e8;border-left:1px solid #f4f0e8;border-right:1.5px solid #000;border-bottom:1px solid #a8a498"></div>
<svg class="a" style="left:465.0px;top:373.5px" width="15" height="15" viewBox="0 0 15 15"><circle cx="7.5" cy="8" r="5.5" fill="#108080"/><circle cx="3" cy="3.5" r="2" fill="#000"/><circle cx="12" cy="3.5" r="2" fill="#000"/><rect x="4" y="6" width="7" height="6" fill="#f0f040"/><path d="M5,8 L10,8" stroke="#000"/></svg>
<div class="a" style="left:482px;top:373px;width:17px;height:16px;background:#d8d2c4;border-top:1px solid #f4f0e8;border-left:1px solid #f4f0e8;border-right:1.5px solid #000;border-bottom:1px solid #a8a498"></div>
<svg class="a" style="left:482.5px;top:373.5px" width="15" height="15" viewBox="0 0 15 15"><rect x="1" y="2" width="13" height="11" fill="#fff" stroke="#0a6a20" stroke-width="1.3"/><rect x="3" y="4" width="9" height="7" fill="#20a040"/><path d="M5,6 L10,10 M10,6 L5,10" stroke="#fff" stroke-width="1.2"/></svg>
<div class="a" style="left:499px;top:373px;width:17px;height:16px;background:#d8d2c4;border-top:1px solid #f4f0e8;border-left:1px solid #f4f0e8;border-right:1.5px solid #000;border-bottom:1px solid #a8a498"></div>
<svg class="a" style="left:499.5px;top:373.5px" width="15" height="15" viewBox="0 0 15 15"><path d="M2,13 L9,6" stroke="#d02020" stroke-width="2.5"/><path d="M8,7 L13,2" stroke="#108030" stroke-width="2.5"/><path d="M10,9 L13,12" stroke="#0a1a80" stroke-width="2"/></svg>
<div class="a" style="left:198px;top:394px;width:324px;height:56px;background:#000"></div>
<div class="a" style="left:199px;top:395px;width:313px;height:46px;background:#fff"></div>
<div class="a" style="left:199px;top:395px;width:313px;height:10px;background:#d8d2c4"></div>
<div class="a" style="left:199px;top:405.5px;width:15px;height:11.5px;background:#d8d2c4;border-top:1px solid #fff"></div>
<div class="a" style="left:199px;top:417.5px;width:15px;height:11.5px;background:#d8d2c4;border-top:1px solid #fff"></div>
<div class="a" style="left:199px;top:429.5px;width:15px;height:11.5px;background:#d8d2c4;border-top:1px solid #fff"></div>
<div class="a" style="left:199px;top:405px;width:313px;height:1.2px;background:#000"></div>
<div class="a" style="left:199px;top:417px;width:313px;height:1.2px;background:#6e6a60"></div>
<div class="a" style="left:199px;top:429px;width:313px;height:1.2px;background:#6e6a60"></div>
<div class="a" style="left:214px;top:395px;width:1.2px;height:46px;background:#000"></div>
<div class="a" style="left:302px;top:395px;width:1.2px;height:46px;background:#6e6a60"></div>
<div class="a" style="left:388px;top:395px;width:1.2px;height:46px;background:#6e6a60"></div>
<div class="a" style="left:475.5px;top:395px;width:1.2px;height:46px;background:#6e6a60"></div>
<div class="a" style="left:199px;top:395px;width:313px;height:46px;overflow:hidden">
<div class="a ls" style="left:21px;top:1px">Project</div>
<div class="a ls" style="left:109px;top:1px">Bandwidth Mbps</div>
<div class="a ls" style="left:195px;top:1px">Type Infrastructure</div>
<div class="a ls" style="left:282px;top:1px">Status</div>
<div class="a mn" style="left:17px;top:10.5px;font-size:9.2px;transform:scaleX(.85)">Atlantis2</div>
<div class="a mn" style="left:105px;top:10.5px;font-size:9.2px;transform:scaleX(.85)">2500</div>
<div class="a mn" style="left:191px;top:10.5px;font-size:9.2px;transform:scaleX(.85)">Submarine Cable</div>
<div class="a mn" style="left:278px;top:10.5px;font-size:9.2px;transform:scaleX(.85)">In Commission</div>
<div class="a mn" style="left:17px;top:22.5px;font-size:9.2px;transform:scaleX(.85)">Atlantis2</div>
<div class="a mn" style="left:105px;top:22.5px;font-size:9.2px;transform:scaleX(.85)">2500</div>
<div class="a mn" style="left:191px;top:22.5px;font-size:9.2px;transform:scaleX(.85)">Submarine Cable</div>
<div class="a mn" style="left:278px;top:22.5px;font-size:9.2px;transform:scaleX(.85)">In Commission</div>
<div class="a mn" style="left:17px;top:34.5px;font-size:9.2px;transform:scaleX(.85)">SAT-3/WASC</div>
<div class="a mn" style="left:105px;top:34.5px;font-size:9.2px;transform:scaleX(.85)">40000</div>
<div class="a mn" style="left:191px;top:34.5px;font-size:9.2px;transform:scaleX(.85)">Submarine Cable</div>
<div class="a mn" style="left:278px;top:34.5px;font-size:9.2px;transform:scaleX(.85)">In Commission</div>
</div>
<div class="a" style="left:512px;top:395px;width:9px;height:46px;background:#f6f4ee"></div>
<div class="a" style="left:512px;top:395px;width:9px;height:10px;background:#d8d2c4;border-top:1px solid #fff;border-left:1px solid #fff;border-right:1px solid #000;border-bottom:1px solid #000"></div>
<svg class="a" style="left:513px;top:398px" width="7" height="5" viewBox="0 0 7 5"><path d="M3.5,1 L6,4 L1,4 Z" fill="#000"/></svg>
<div class="a" style="left:512px;top:433px;width:9px;height:8px;background:#d8d2c4;border-top:1px solid #fff;border-left:1px solid #fff;border-right:1px solid #000;border-bottom:1px solid #000"></div>
<svg class="a" style="left:513px;top:435px" width="7" height="5" viewBox="0 0 7 5"><path d="M1,1 L6,1 L3.5,4 Z" fill="#000"/></svg>
<div class="a" style="left:199px;top:441px;width:322px;height:8px;background:#f6f4ee"></div>
<div class="a" style="left:199px;top:441px;width:9px;height:8px;background:#d8d2c4;border-top:1px solid #fff;border-left:1px solid #fff;border-right:1px solid #000;border-bottom:1px solid #000"></div>
<svg class="a" style="left:201px;top:443px" width="5" height="7" viewBox="0 0 5 7"><path d="M1,3.5 L4,1 L4,6 Z" fill="#000"/></svg>
<div class="a" style="left:208px;top:441px;width:30px;height:8px;background:#d8d2c4;border-top:1px solid #fff;border-left:1px solid #fff;border-right:1px solid #000;border-bottom:1px solid #000"></div>
<div class="a" style="left:504px;top:441px;width:8px;height:8px;background:#d8d2c4;border-top:1px solid #fff;border-left:1px solid #fff;border-right:1px solid #000;border-bottom:1px solid #000"></div>
<svg class="a" style="left:505px;top:443px" width="5" height="7" viewBox="0 0 5 7"><path d="M4,3.5 L1,1 L1,6 Z" fill="#000"/></svg>
<div class="a" style="left:512px;top:441px;width:9px;height:8px;background:#f4f2ec;border:1px solid #6e6a60"></div>
<div class="a" style="left:198px;top:453.5px;width:74px;height:11px;border-top:1px solid #8a8678;border-left:1px solid #8a8678;border-right:1px solid #fff;border-bottom:1px solid #fff"></div>
<div class="a mn" style="left:202px;top:454px;font-size:9px">Total Records: &nbsp;75</div>
<div class="a" style="left:273px;top:453.5px;width:121px;height:11px;border-top:1px solid #8a8678;border-left:1px solid #8a8678;border-right:1px solid #fff;border-bottom:1px solid #fff"></div>
<div class="a mn" style="left:275px;top:454px;font-size:9px">Number of Records Selected: &nbsp;2</div>
<div class="a" style="left:395px;top:453.5px;width:71px;height:11px;border-top:1px solid #8a8678;border-left:1px solid #8a8678;border-right:1px solid #fff;border-bottom:1px solid #fff"></div>
<div class="a" style="left:468px;top:453.5px;width:48px;height:11px;border-top:1px solid #8a8678;border-left:1px solid #8a8678;border-right:1px solid #fff;border-bottom:1px solid #fff"></div>
<svg class="a" style="left:515px;top:457px" width="8" height="8" viewBox="0 0 8 8"><path d="M7,1 L1,7 M7,4 L4,7" stroke="#8a8678" stroke-width="1"/><path d="M7,2 L2,7 M7,5 L5,7" stroke="#fff" stroke-width="0.8"/></svg>
<div class="a tt" style="left:529px;top:42px;width:128px;height:10px"></div>
<div class="a ttx" style="left:531px;top:41.5px;">Tabular Data Set and Queries</div>
<div class="a" style="left:646px;top:43px;width:10px;height:8px;background:#d8d2c4;border-top:1px solid #ece8e0;border-left:1px solid #ece8e0;border-right:1px solid #000;border-bottom:1px solid #000"></div>
<svg class="a" style="left:648.5px;top:45px" width="5" height="4" viewBox="0 0 5 4"><path d="M0.5,0.5 L4.5,3.5 M4.5,0.5 L0.5,3.5" stroke="#000" stroke-width="1.3"/></svg>
<div class="a" style="left:528px;top:53px;width:129px;height:411px;background:#000"></div>
<div class="a" style="left:529px;top:54px;width:127px;height:399px;background:#fff"></div>
<div class="a" style="left:529px;top:54px;width:127px;height:399px;overflow:hidden">
<svg class="a" style="left:2px;top:3px" width="12" height="10" viewBox="0 0 12 10"><path d="M1.5,0.5 L1.5,8.5 L9.5,8.5" stroke="#8c8c8c" stroke-width="1" fill="none"/><path d="M3.5,4.5 L8.5,4.5" stroke="#8c8c8c" stroke-width="1.1"/><path d="M6,2 L6,7" stroke="#8c8c8c" stroke-width="1.1"/></svg>
<div class="a ls" style="left:13px;top:3.5px;color:#8c8c8c">Alternative Infrastructure Planned</div>
<svg class="a" style="left:2px;top:17.599999999999994px" width="12" height="10" viewBox="0 0 12 10"><path d="M1.5,0.5 L1.5,8.5 L9.5,8.5" stroke="#8c8c8c" stroke-width="1" fill="none"/><path d="M3.5,4.5 L8.5,4.5" stroke="#8c8c8c" stroke-width="1.1"/><path d="M6,2 L6,7" stroke="#8c8c8c" stroke-width="1.1"/></svg>
<div class="a ls" style="left:13px;top:18.099999999999994px;color:#8c8c8c">National Backbones Planned</div>
<svg class="a" style="left:2px;top:32.2px" width="12" height="10" viewBox="0 0 12 10"><path d="M1.5,0.5 L1.5,8.5 L9.5,8.5" stroke="#8c8c8c" stroke-width="1" fill="none"/><path d="M3.5,4.5 L8.5,4.5" stroke="#8c8c8c" stroke-width="1.1"/><path d="M6,2 L6,7" stroke="#8c8c8c" stroke-width="1.1"/></svg>
<div class="a ls" style="left:13px;top:32.7px;color:#8c8c8c">Alternative Infrastructure</div>
<svg class="a" style="left:2px;top:47.400000000000006px" width="12" height="10" viewBox="0 0 12 10"><path d="M1.5,0.5 L1.5,8.5 L9.5,8.5" stroke="#8c8c8c" stroke-width="1" fill="none"/><path d="M3.5,4.5 L8.5,4.5" stroke="#8c8c8c" stroke-width="1.1"/><path d="M6,2 L6,7" stroke="#8c8c8c" stroke-width="1.1"/></svg>
<div class="a ls" style="left:13px;top:47.900000000000006px;color:#8c8c8c">National Backbones</div>
<svg class="a" style="left:2px;top:63px" width="12" height="10" viewBox="0 0 12 10"><path d="M1.5,0.5 L1.5,8.5 L9.5,8.5" stroke="#000" stroke-width="1" fill="none"/><path d="M3.5,4.5 L8.5,4.5" stroke="#000" stroke-width="1.1"/></svg>
<div class="a ls" style="left:13px;top:63.5px;color:#000">Submarine Cables</div>
<svg class="a" style="left:2px;top:92.80000000000001px" width="12" height="10" viewBox="0 0 12 10"><path d="M1.5,0.5 L1.5,8.5 L9.5,8.5" stroke="#000" stroke-width="1" fill="none"/><path d="M3.5,4.5 L8.5,4.5" stroke="#000" stroke-width="1.1"/><path d="M6,2 L6,7" stroke="#000" stroke-width="1.1"/></svg>
<div class="a ls" style="left:13px;top:93.30000000000001px;color:#000">Parallel</div>
<svg class="a" style="left:2px;top:107.80000000000001px" width="12" height="10" viewBox="0 0 12 10"><path d="M1.5,0.5 L1.5,8.5 L9.5,8.5" stroke="#8c8c8c" stroke-width="1" fill="none"/><path d="M3.5,4.5 L8.5,4.5" stroke="#8c8c8c" stroke-width="1.1"/><path d="M6,2 L6,7" stroke="#8c8c8c" stroke-width="1.1"/></svg>
<div class="a ls" style="left:13px;top:108.30000000000001px;color:#8c8c8c">Regional Projects</div>
<svg class="a" style="left:2px;top:122.4px" width="12" height="10" viewBox="0 0 12 10"><path d="M1.5,0.5 L1.5,8.5 L9.5,8.5" stroke="#000" stroke-width="1" fill="none"/><path d="M3.5,4.5 L8.5,4.5" stroke="#000" stroke-width="1.1"/><path d="M6,2 L6,7" stroke="#000" stroke-width="1.1"/></svg>
<div class="a ls" style="left:13px;top:122.9px;color:#000">Net Forecasts Kbps</div>
<div class="a" style="left:0px;top:75.5px;width:127px;height:14.5px;background:#048282"></div>
<svg class="a" style="left:13px;top:78px" width="22" height="10" viewBox="0 0 22 10"><path d="M1,5 L3.5,8 L8,1" stroke="#fff" stroke-width="1" fill="none"/><path d="M0.5,9 L8,9" stroke="#fff" stroke-width="1"/><rect x="11.5" y="1.5" width="10" height="8" fill="none" stroke="#fff" stroke-width="1"/><path d="M11.5,4.5 L21.5,4.5 M16.5,1.5 L16.5,9.5" stroke="#fff" stroke-width="1"/></svg>
<div class="a ls" style="left:37px;top:78.5px;color:#fff">Submarine Cables</div>
</div>
<div class="a" style="left:529px;top:453px;width:127px;height:10px;background:#f6f4ee"></div>
<div class="a" style="left:529px;top:453px;width:9px;height:10px;background:#d8d2c4;border-top:1px solid #fff;border-left:1px solid #fff;border-right:1px solid #000;border-bottom:1px solid #000"></div>
<svg class="a" style="left:531px;top:456px" width="5" height="7" viewBox="0 0 5 7"><path d="M1,3.5 L4,1 L4,6 Z" fill="#000"/></svg>
<div class="a" style="left:538px;top:453px;width:55px;height:10px;background:#d8d2c4;border-top:1px solid #fff;border-left:1px solid #fff;border-right:1px solid #000;border-bottom:1px solid #000"></div>
<div class="a" style="left:647px;top:453px;width:9px;height:10px;background:#d8d2c4;border-top:1px solid #fff;border-left:1px solid #fff;border-right:1px solid #000;border-bottom:1px solid #000"></div>
<svg class="a" style="left:649px;top:456px" width="5" height="7" viewBox="0 0 5 7"><path d="M4,3.5 L1,1 L1,6 Z" fill="#000"/></svg>
<div class="a" style="left:529px;top:463px;width:128px;height:1px;background:#000"></div>
<div class="a" style="left:195.3px;top:38px;width:2.5px;height:430px;background:#f0ece2"></div>
<div class="a" style="left:526px;top:38px;width:2px;height:430px;background:#f0ece2"></div>
<div class="a" style="left:60px;top:138px;width:134px;height:1.5px;background:#f0ece2"></div>
<div class="a" style="left:60px;top:252.5px;width:134px;height:1.5px;background:#f0ece2"></div>
<div class="a" style="left:196px;top:339px;width:328px;height:1.5px;background:#f0ece2"></div>
<div class="a" style="left:194.2px;top:38px;width:1.1px;height:430px;background:#000"></div>
<div class="a" style="left:524.6px;top:38px;width:1.5px;height:430px;background:#000"></div>
<div class="a" style="left:60px;top:137px;width:134px;height:1.1px;background:#000"></div>
<div class="a" style="left:60px;top:251.3px;width:134px;height:1.3px;background:#000"></div>
<div class="a" style="left:195px;top:337.8px;width:330px;height:1.1px;background:#000"></div>
</body></html>
